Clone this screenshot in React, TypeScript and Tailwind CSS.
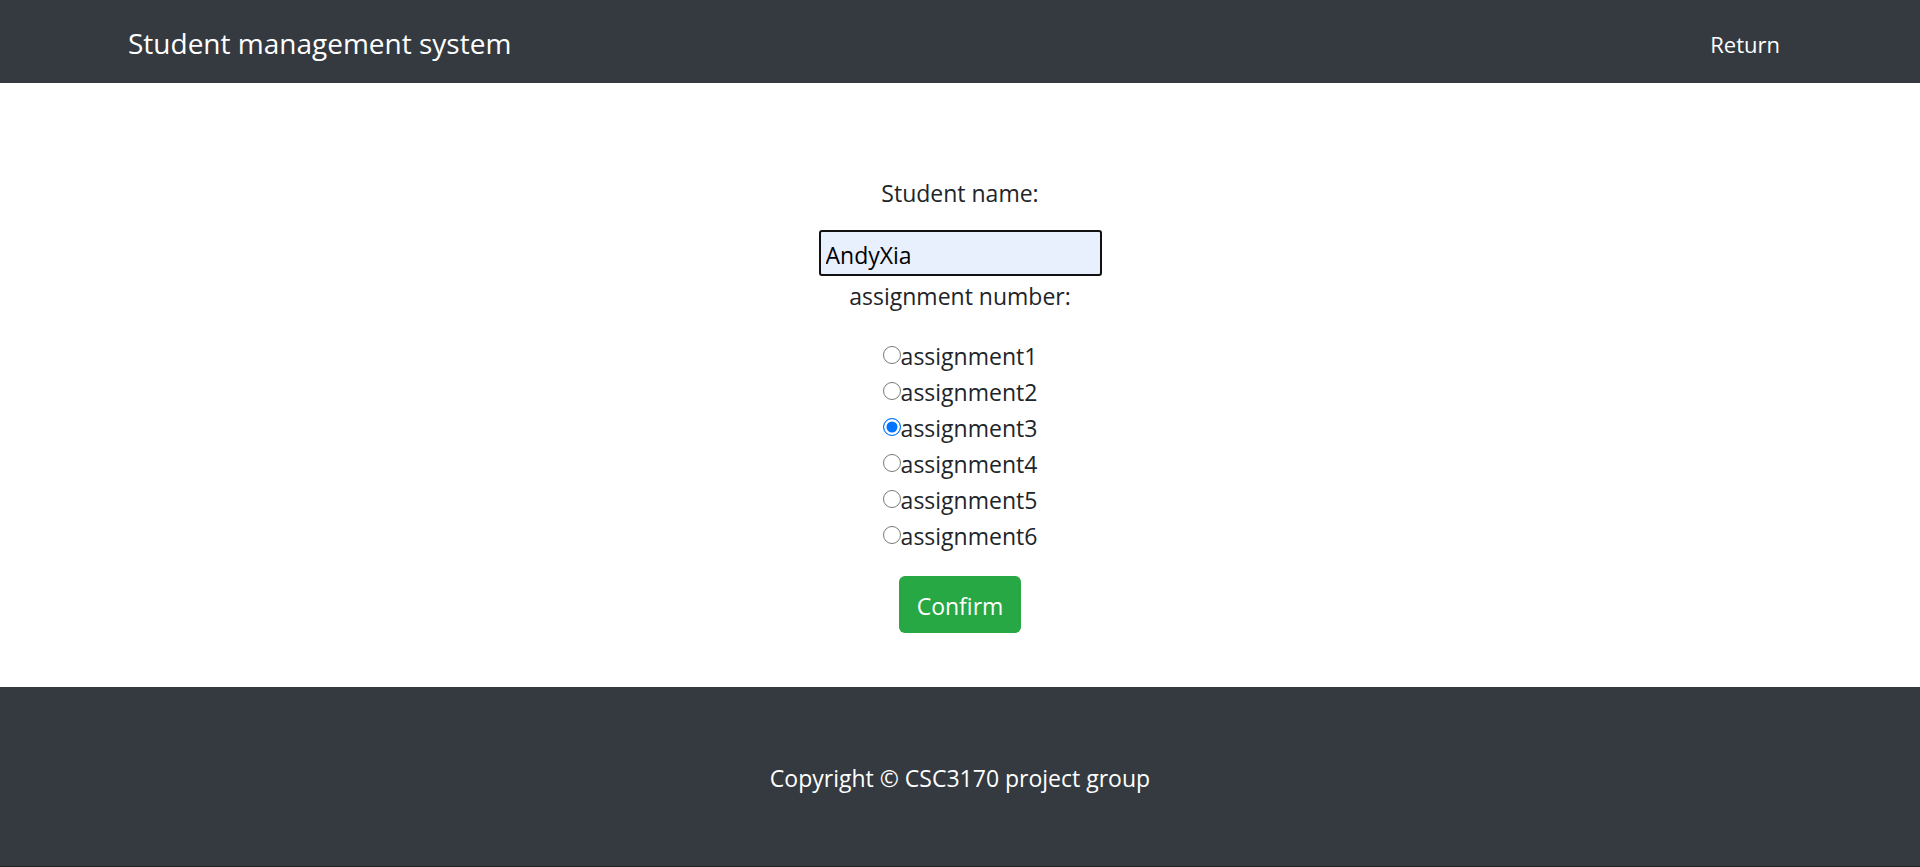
import React, { useState } from "react";

const assignments = ["assignment1", "assignment2", "assignment3", "assignment4", "assignment5", "assignment6"];

const App = () => {
  const [name, setName] = useState("AndyXia");
  const [picked, setPicked] = useState("assignment3");

  return (
    <div className="min-h-screen flex flex-col bg-white text-[#212529]" style={{ fontFamily: '"Open Sans", "Noto Sans", sans-serif' }}>
      {/* navbar */}
      <nav className="h-[83px] bg-[#343a40] flex items-center justify-between pl-[128px] pr-[140px]">
        <span className="text-white text-[28px] leading-none pt-[2px]">Student management system</span>
        <a href="#" className="text-white text-[22px] leading-none pt-[4px]">Return</a>
      </nav>

      {/* form */}
      <main className="h-[604px] flex flex-col items-center pt-[92px]">
        <p className="text-[23px] leading-[36px]">Student name:</p>
        <input
          value={name}
          onChange={e => setName(e.target.value)}
          className="mt-[19px] w-[283px] h-[46px] bg-[#e8f0fe] border-2 border-[#111] rounded-[3px] px-[5px] pt-[3px] text-[23px] text-black outline-none"
        />
        <p className="text-[23px] leading-[36px] pt-[2px]">assignment number:</p>
        <div className="mt-[24px] flex flex-col">
          {assignments.map(a => (
            <label key={a} className="flex items-center h-[36px] text-[23px] leading-[36px]">
              <input
                type="radio"
                name="assignment"
                checked={picked === a}
                onChange={() => setPicked(a)}
                className="appearance-none m-0 w-[18px] h-[18px] shrink-0 rounded-full border-[1.5px] border-[#7a7a7a] bg-white checked:border-[#0075ff] checked:bg-[#0075ff] checked:shadow-[inset_0_0_0_2.5px_white] -mt-[2px]"
              />
              <span>{a}</span>
            </label>
          ))}
        </div>
        <button className="mt-[22px] h-[57px] px-[18px] pt-[4px] bg-[#28a745] text-white text-[23px] rounded-[6px]">Confirm</button>
      </main>

      {/* footer */}
      <footer className="h-[179px] bg-[#343a40] flex items-center justify-center">
        <span className="text-white text-[23px] pt-[4px]">Copyright © CSC3170 project group</span>
      </footer>
      <div className="h-px bg-[#222]" />
    </div>
  );
};

export default App;
